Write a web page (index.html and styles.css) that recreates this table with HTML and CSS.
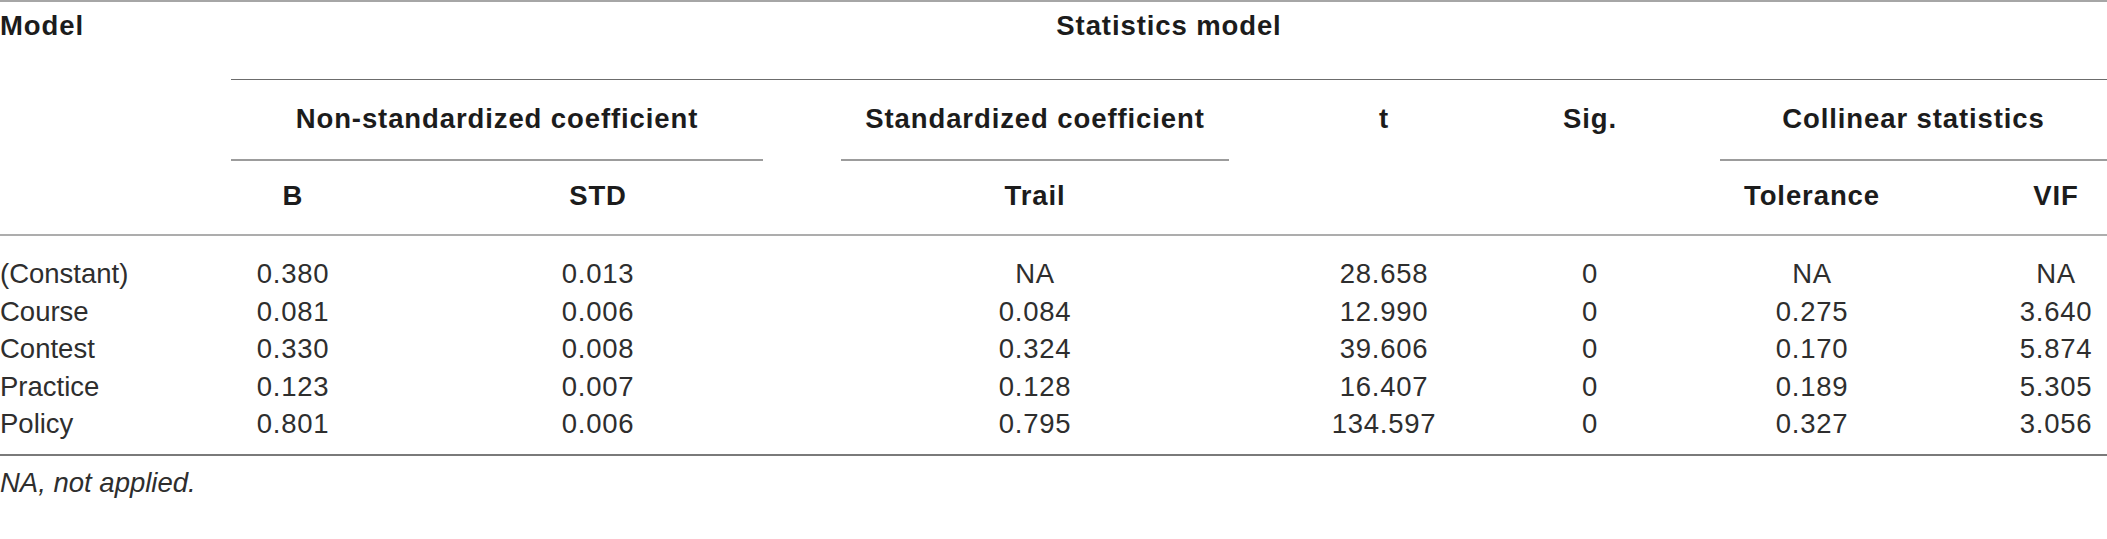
FILE: index.html
```html
<!DOCTYPE html>
<html lang="en">
<head>
<meta charset="utf-8">
<title>Statistics model</title>
<link rel="stylesheet" href="styles.css">
</head>
<body>
<div class="table">
  <div class="head">
    <div class="model">Model</div>
    <div class="top-group">Statistics model</div>
    <div class="group g-nonstd">Non-standardized coefficient</div>
    <div class="group g-std">Standardized coefficient</div>
    <div class="solo s-t">t</div>
    <div class="solo s-sig">Sig.</div>
    <div class="group g-col">Collinear statistics</div>
    <div class="sub c2">B</div>
    <div class="sub c3">STD</div>
    <div class="sub c4">Trail</div>
    <div class="sub c7">Tolerance</div>
    <div class="sub c8">VIF</div>
  </div>
  <div class="body">
    <div class="cell first">(Constant)</div><div class="cell">0.380</div><div class="cell">0.013</div><div class="cell">NA</div><div class="cell">28.658</div><div class="cell">0</div><div class="cell">NA</div><div class="cell last">NA</div>
    <div class="cell first">Course</div><div class="cell">0.081</div><div class="cell">0.006</div><div class="cell">0.084</div><div class="cell">12.990</div><div class="cell">0</div><div class="cell">0.275</div><div class="cell last">3.640</div>
    <div class="cell first">Contest</div><div class="cell">0.330</div><div class="cell">0.008</div><div class="cell">0.324</div><div class="cell">39.606</div><div class="cell">0</div><div class="cell">0.170</div><div class="cell last">5.874</div>
    <div class="cell first">Practice</div><div class="cell">0.123</div><div class="cell">0.007</div><div class="cell">0.128</div><div class="cell">16.407</div><div class="cell">0</div><div class="cell">0.189</div><div class="cell last">5.305</div>
    <div class="cell first">Policy</div><div class="cell">0.801</div><div class="cell">0.006</div><div class="cell">0.795</div><div class="cell">134.597</div><div class="cell">0</div><div class="cell">0.327</div><div class="cell last">3.056</div>
  </div>
  <p class="note">NA, not applied.</p>
</div>
</body>
</html>
```
FILE: styles.css
```css
html, body {
  margin: 0;
  padding: 0;
  background: #ffffff;
}

.table {
  width: 2107px;
  font-family: "Liberation Sans", Arial, Helvetica, sans-serif;
  font-size: 27.5px;
  color: #2e2e2e;
  --cols: 192px 202px 408px 466px 232px 180px 264px 163px;
}

.head {
  display: grid;
  grid-template-columns: var(--cols);
  grid-template-rows: 78px 81px 73px;
  border-top: 2px solid #a6a6a6;
  border-bottom: 2px solid #adadad;
  font-weight: bold;
  color: #1c1c1c;
  letter-spacing: 0.9px;
  line-height: 30px;
}

.model {
  grid-column: 1;
  grid-row: 1 / 4;
  padding-top: 9px;
}

.top-group {
  grid-column: 2 / 9;
  grid-row: 1;
  margin-left: 39px;
  padding-top: 9px;
  text-align: center;
  border-bottom: 1px solid #6c6c6c;
}

.group {
  grid-row: 2;
  margin: 0 39px;
  padding-top: 24px;
  text-align: center;
  border-bottom: 2px solid #9c9c9c;
}

.g-nonstd { grid-column: 2 / 4; }
.g-std { grid-column: 4; }
.g-col { grid-column: 7 / 9; margin: 0 0 0 40px; }

.solo {
  grid-row: 2;
  padding-top: 24px;
  text-align: center;
}

.s-t { grid-column: 5; }
.s-sig { grid-column: 6; }

.sub {
  grid-row: 3;
  padding: 20px 39px 0;
  text-align: center;
}

.c2 { grid-column: 2; }
.c3 { grid-column: 3; }
.c4 { grid-column: 4; }
.c7 { grid-column: 7; }
.c8 { grid-column: 8; padding: 20px 0 0 61px; }

.body {
  display: grid;
  grid-template-columns: var(--cols);
  grid-auto-rows: 37.6px;
  padding: 19px 0 11px;
  border-bottom: 2px solid #7a7a7a;
  line-height: 37.6px;
  letter-spacing: 0.7px;
}

.cell {
  padding: 0 39px;
  text-align: center;
  white-space: nowrap;
}

.cell.first {
  padding: 0;
  text-align: left;
  letter-spacing: 0;
}

.cell.last {
  padding: 0 0 0 61px;
}

.note {
  margin: 12px 0 0;
  font-style: italic;
  line-height: 30px;
}
```
